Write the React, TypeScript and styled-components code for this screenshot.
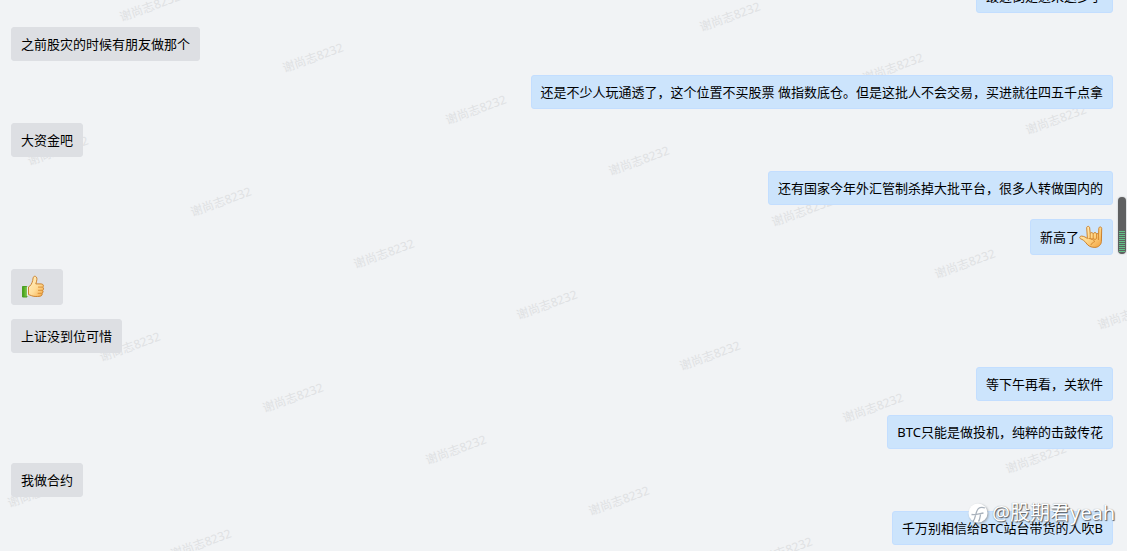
import React from "react";
import styled, { createGlobalStyle } from "styled-components";

const GlobalStyle = createGlobalStyle`
  body {
    margin: 0;
    background: #f1f3f5;
    font-family: "Noto Sans", "Noto Sans CJK SC", sans-serif;
  }
`;

const Chat = styled.main`
  position: relative;
  display: flex;
  flex-direction: column;
  height: 100vh;
  overflow: hidden;
  background: #f1f3f5;
`;

const Messages = styled.ol`
  position: relative;
  flex: 1;
  min-height: 0;
  display: flex;
  flex-direction: column;
  justify-content: flex-end;
  gap: 14px;
  margin: 0;
  padding: 0 14px 6px 11px;
  list-style: none;
`;

const Bubble = styled.li<{ $own?: boolean }>`
  display: flex;
  align-items: center;
  flex-shrink: 0;
  align-self: ${(p) => (p.$own ? "flex-end" : "flex-start")};
  box-sizing: border-box;
  min-height: 34px;
  padding: 5px 9px;
  border: 1px solid ${(p) => (p.$own ? "#c3deff" : "#dddfe3")};
  border-radius: 3px;
  background: ${(p) => (p.$own ? "#cce4fc" : "#dddfe3")};
  color: #000;
  font-size: 13px;
  line-height: 22px;
`;

const Emoji = styled.svg<{ $alone?: boolean }>`
  flex-shrink: 0;
  width: 24px;
  height: 24px;
  margin-right: ${(p) => (p.$alone ? "8px" : "0")};
`;

const MarkLayer = styled.div`
  position: absolute;
  inset: 0;
  overflow: hidden;
  pointer-events: none;
`;

const Mark = styled.span`
  position: absolute;
  transform: translate(-50%, -50%) rotate(-20deg);
  color: #dfe1e3;
  font-size: 12px;
  line-height: 16px;
  white-space: nowrap;
`;

const ScrollThumb = styled.div`
  position: absolute;
  top: 197px;
  right: 1px;
  display: flex;
  flex-direction: column;
  justify-content: flex-end;
  box-sizing: border-box;
  width: 8px;
  height: 57px;
  padding: 0 1px 2px;
  border-radius: 4px;
  background: #5f6061;
  box-shadow: 0 0 2px #b5b7b9;
`;

const Grip = styled.div`
  height: 21px;
  background: repeating-linear-gradient(#62c487 0 1px, #5f6061 1px 2px);
`;

const Credit = styled.div`
  position: absolute;
  right: 12px;
  bottom: 25px;
  display: flex;
  align-items: center;
  gap: 4px;
  color: #fff;
  font-size: 20px;
  line-height: 26px;
  text-shadow: 1px 1px 1px #55585c, 0 0 1px #8c9094;
`;

const CreditLogo = styled.svg`
  width: 20px;
  height: 20px;
  filter: drop-shadow(1px 1px 1px #9a9ea3);
`;

const ThumbUp = () => (
  <Emoji $alone viewBox="0 0 24 24" role="img" aria-label="赞">
    <defs>
      <linearGradient id="thumbSkin" x1="0" y1="0" x2="1" y2="1">
        <stop offset="0" stopColor="#fff3c9" />
        <stop offset="0.55" stopColor="#ffdc98" />
        <stop offset="1" stopColor="#f5a944" />
      </linearGradient>
      <linearGradient id="thumbCuff" x1="0" y1="0" x2="1" y2="0">
        <stop offset="0" stopColor="#3c9a18" />
        <stop offset="1" stopColor="#83cf45" />
      </linearGradient>
    </defs>
    <path d="M1.500 11.500H6v10.500H1.500z" fill="url(#thumbCuff)" stroke="#4b9e24" />
    <path d="M6 11.500h1.800v9.500H6z" fill="#fff" stroke="#c9d4b7" strokeWidth=".6" />
    <path
      d="M7.500 12C9.500 11 11 8.500 11.700 5.500c.3-2 .4-4 1.700-4.200 1.700-.3 2.700 1.300 2.500 3.200-.1 1.600-.7 3-1.100 4.400h5.400c2.400 0 2.800 2.400 1.400 3.200 1.400.9 1.100 2.700 0 3.200.9 1 .5 2.500-.6 2.900.6 1.200-.2 2.800-1.800 3-3.700.6-7 .2-8.700-.5l-3-1.200z"
      fill="url(#thumbSkin)"
      stroke="#c87a20"
      strokeWidth=".9"
    />
    <path d="M17 12.100h4.400M17 15.300h4.400M16.700 18.300h4" fill="none" stroke="#d78c31" strokeWidth=".9" />
  </Emoji>
);

const RockHand = () => (
  <Emoji viewBox="0 0 24 24" role="img" aria-label="摇滚">
    <defs>
      <linearGradient id="rockSkin" x1="0" y1="0" x2="1" y2="1">
        <stop offset="0" stopColor="#fff0c0" />
        <stop offset="0.5" stopColor="#ffd98c" />
        <stop offset="1" stopColor="#f2a03a" />
      </linearGradient>
    </defs>
    <path
      d="M8.400 13.500 7.700 3c0-2.200 2.800-2.200 3 0l.5 5.500c.5-1.200 2.500-1.200 3 .1.600-1.300 3-1.300 3.500.1h1.900l.2-5.300c.2-2 2.900-1.900 2.900.1l-.3 13c-.1 3-2.800 5.900-6.500 5.900-4.100 0-6.500-1.200-9-4.600-1.400-2-3.300-3.300-5.300-4-1.800-.9-.6-2.900 1.200-2.700 2.200.2 3.800 1.100 5.600 2.400z"
      fill="url(#rockSkin)"
      stroke="#c77820"
      strokeWidth=".9"
    />
    <path
      d="M11.200 8.500v4.800c.2 1.400 2.800 1.400 3 0V8.600m0 4.700c.3 1.400 3.100 1.400 3.400 0V8.700M19.500 8.700l-.1 6.300M9.500 13.500c3.200 0 5.600 1 6.100 3.200-1.900.9-3.300 1.800-3.700 3.500"
      fill="none"
      stroke="#d1832c"
      strokeWidth=".9"
    />
  </Emoji>
);

type Message = { own?: boolean; text?: string; emoji?: React.ReactNode };

const messages: Message[] = [
  { own: true, text: "最近倒是进来这多了" },
  { text: "之前股灾的时候有朋友做那个" },
  { own: true, text: "还是不少人玩通透了，这个位置不买股票 做指数底仓。但是这批人不会交易，买进就往四五千点拿" },
  { text: "大资金吧" },
  { own: true, text: "还有国家今年外汇管制杀掉大批平台，很多人转做国内的" },
  { own: true, text: "新高了", emoji: <RockHand /> },
  { emoji: <ThumbUp /> },
  { text: "上证没到位可惜" },
  { own: true, text: "等下午再看，关软件" },
  { own: true, text: "BTC只能是做投机，纯粹的击鼓传花" },
  { text: "我做合约" },
  { own: true, text: "千万别相信给BTC站台带货的人吹B" },
];

// Each diagonal run of watermarks: starting centre and number of repeats.
const runs = [
  { x: 730, y: 17, count: 3 },
  { x: 150, y: 7, count: 7 },
  { x: 58, y: 151, count: 7 },
  { x: 130, y: 347, count: 5 },
  { x: 38, y: 493, count: 2 },
];

const marks = runs.flatMap(({ x, y, count }) =>
  Array.from({ length: count }, (_, i) => ({
    left: x + i * 163,
    top: Math.round(y + (i * 154) / 3),
  }))
);

export default function App() {
  return (
    <Chat>
      <GlobalStyle />
      <MarkLayer aria-hidden="true">
        {marks.map((m) => (
          <Mark key={`${m.left}-${m.top}`} style={m}>
            谢尚志8232
          </Mark>
        ))}
      </MarkLayer>
      <Messages>
        {messages.map((m, i) => (
          <Bubble key={i} $own={m.own}>
            {m.text && <span>{m.text}</span>}
            {m.emoji}
          </Bubble>
        ))}
      </Messages>
      <ScrollThumb>
        <Grip />
      </ScrollThumb>
      <Credit>
        <CreditLogo viewBox="0 0 20 20" aria-hidden="true">
          <circle cx="10" cy="10" r="9.500" fill="#fff" />
          <path
            d="M5 18.500C8 15 7.500 8 10.500 5.500c1.800-1.500 4.500-1.300 6.500-.5M3.500 11.500c4 .8 8-.8 12-1.500M10.500 18.500c1.500-2 1.500-4 2-7"
            fill="none"
            stroke="#a9b2bc"
            strokeWidth="1.300"
          />
        </CreditLogo>
        <span>@股期君yeah</span>
      </Credit>
    </Chat>
  );
}
